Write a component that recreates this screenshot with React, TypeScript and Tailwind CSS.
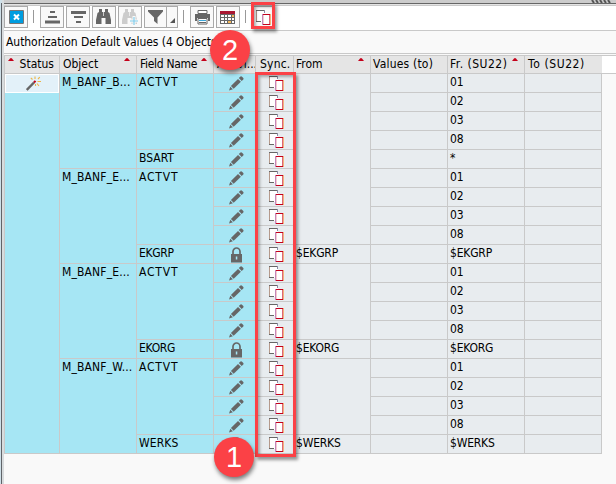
import React from "react";

type Cell = { n: number; text?: string; icon?: React.ReactNode; spacing?: string };

const HEIGHTS: Record<number, string> = {
  1: "h-[19px]",
  4: "h-[76px]",
  5: "h-[95px]",
  9: "h-[171px]",
  20: "h-[380px]",
};

function SyncIcon() {
  return (
    <svg width="15" height="15" viewBox="0 0 15 15" shapeRendering="crispEdges">
      <rect x="0" y="0" width="9" height="12" fill="#fff" />
      <path d="M0.5 0V12" stroke="#b59a8c" />
      <path d="M0 0.5H9M0 11.5H5" stroke="#666" />
      <path d="M8.5 0V3" stroke="#8b8ba8" />
      <rect x="6" y="4" width="9" height="11" fill="#fff" />
      <path d="M6.5 4V15" stroke="#c486b8" />
      <path d="M14.5 4V15" stroke="#f3b27c" />
      <path d="M7 4.5H14M7 14.5H14" stroke="#c4001a" />
      <path d="M13.5 4V15" stroke="#c4001a" strokeOpacity=".6" />
      <path d="M7.5 4V15" stroke="#c4001a" strokeOpacity=".2" />
    </svg>
  );
}

function Pencil() {
  return (
    <svg width="15" height="15" viewBox="0 0 15 15" fill="#666">
      <path d="M0 14.500 1.300 10.800 3.900 13.200Z" />
      <path d="M1.900 9.900 9 2.900 11.900 5.700 4.700 12.700Z" />
      <path d="M9.800 2.100 11.500.6Q12.300 0 13 .7L14.300 2Q14.900 2.700 14.300 3.400L12.700 4.900Z" />
    </svg>
  );
}

function Lock() {
  return (
    <svg width="13" height="16" viewBox="0 0 13 16">
      <path d="M3 8V4.500a3.500 3.500 0 0 1 7 0V8" fill="none" stroke="#666" strokeWidth="1.700" />
      <path fill="#666" d="M1 7h11v8.500H1z" />
      <path fill="#a6e6f4" d="M5.800 9.500h1.500v3H5.800z" />
    </svg>
  );
}

function Wand() {
  return (
    <svg width="15" height="15" viewBox="0 0 15 15">
      <path d="M.8 14 8 6.500" stroke="#666" strokeWidth="2.400" />
      <path d="M8 6.500 9.500 4.800" stroke="#c4001a" strokeWidth="2" />
      <path d="M9 3V.5M12 3l1.800-1.800M11.500 5.500H15M11 7.500l2 2.500M6.500 3.500 4.800 1.800M9.500 8v2" stroke="#eeb545" strokeWidth="1.100" />
    </svg>
  );
}

function Column({ title, width, cells, tone, sorted, head = "pl-[3px]", last }: {
  title: string; width: string; cells: Cell[]; tone: string; sorted?: "left" | "right"; head?: string; last?: boolean;
}) {
  return (
    <div className={`${width} flex shrink-0 flex-col`}>
      <div className={`relative h-[18px] overflow-hidden whitespace-nowrap border-b border-[#c9c9c9] bg-[#e5e5e5] leading-[17px] ${last ? "" : "border-r"} ${head}`}>
        {title}
        {sorted && (
          <svg className={`absolute top-[2px] ${sorted === "left" ? "left-[3px]" : "right-[6px]"}`} width="6" height="3" viewBox="0 0 6 3">
            <path d="M0 3 2 .500 3 0 4 .500 6 3Z" fill="#c4001a" />
          </svg>
        )}
      </div>
      {cells.map((c, i) => (
        <div key={i} className={`${HEIGHTS[c.n]} ${tone} overflow-hidden whitespace-nowrap border-b border-r border-[#c9c9c9] leading-[17px] ${c.spacing ?? ""} ${c.icon ? "flex items-start justify-center" : "pl-[2px]"}`}>
          {c.icon ?? c.text}
        </div>
      ))}
    </div>
  );
}

const rows = Array.from({ length: 20 }, (_, i) => i);
const codes = ["01", "02", "03", "08"];
const orgs = ["*", "$EKGRP", "$EKORG", "$WERKS"];
const fields = [
  { name: "BSART", spacing: "" },
  { name: "EKGRP", spacing: "tracking-[-0.3px]" },
  { name: "EKORG", spacing: "tracking-[-0.3px]" },
  { name: "WERKS", spacing: "tracking-[0.1px]" },
];
const cyan = "bg-[#a6e6f4]";
const grey = "bg-[#e8ecef]";

function Button({ children, className = "w-6" }: { children: React.ReactNode; className?: string }) {
  return <div className={`${className} flex h-[22px] items-center justify-center border border-[#aaa] bg-[#f9f9f9]`}>{children}</div>;
}

function Binoculars({ color, plus }: { color: string; plus?: boolean }) {
  return (
    <svg width="16" height="16" viewBox="0 0 16 16">
      <path fill={color} d="M3 0h3v3h3V0h3v3l1.500 1 1.500 7v4H9.500V9h-4v6H0v-4l1.500-7L3 3z" />
      <path d="M7.500 3V7" stroke="#f9f9f9" strokeWidth=".7" />
      {plus && <path d="M12 7v9M7.500 12H16" stroke="#f9f9f9" strokeWidth="3" />}
      {plus && <path d="M12 8v8M8 12H16" stroke="#82cdeb" strokeWidth="1.200" />}
    </svg>
  );
}

function Badge({ n, className }: { n: number; className: string }) {
  return (
    <div className={`absolute flex size-10 items-center justify-center rounded-full bg-[#fb4146] font-['Liberation_Sans',sans-serif] text-[29px] leading-none text-white shadow-[1px_3px_4px_rgba(0,0,0,0.5)] ${className}`}>
      {n}
    </div>
  );
}

export default function App() {
  return (
    <div className="relative flex h-[484px] w-[616px] overflow-hidden bg-[#f9f9f9] font-['DejaVu_Sans_Condensed','DejaVu_Sans',sans-serif] text-[12px] font-normal text-black">
      <div className="w-1 shrink-0 border-r-2 border-[#d8dcde] bg-[#cfe0e8]">
        <div className="mt-[3px] ml-px h-full w-px bg-[#606469]" />
      </div>
      <div className="flex min-w-0 flex-1 flex-col">
        <div className="flex h-[3px] shrink-0 justify-end bg-[#ccc] pr-[3px]">
          <svg width="22" height="3" viewBox="0 0 22 3"><path d="M1 0l2 3M5 0l2 3M9 0l2 3M13 0l2 3M17 0l2 3" stroke="#555" strokeWidth="2" /></svg>
        </div>
        <div className="h-[3px] shrink-0 border-t border-b border-t-[#666] border-b-[#c9c9c9] bg-[#e4e4e4]" />
        <div className="flex h-[25px] shrink-0 border-b border-[#c9c9c9] bg-white">
          <Button>
            <svg width="15" height="14" viewBox="0 0 15 14"><path d="M.500.500h14v13H.500z" fill="#fff" stroke="#777" /><path d="M1 1h13v12H1z" fill="#009de0" /><path d="m5 4.500 5 5m0-5-5 5" stroke="#fff" strokeWidth="2" /></svg>
          </Button>
          <div className="mr-[6px] ml-[5px] mt-1 h-[13px] w-px bg-[#999]" />
          <div className="flex gap-[2px]">
            <Button>
              <svg width="15" height="14" viewBox="0 0 15 14" fill="#666"><path d="M5 1h5v2H5zM3 6h9v2H3zM0 10.500h15v3H0z" /></svg>
            </Button>
            <Button>
              <svg width="15" height="14" viewBox="0 0 15 14" fill="#666"><path d="M0 1h15v3H0zM3 6h9v2H3zM5 11h5v2H5z" /></svg>
            </Button>
            <Button><Binoculars color="#666" /></Button>
            <Button><Binoculars color="#ccc" plus /></Button>
            <div className="flex">
              <Button className="w-[23px]">
                <svg width="15" height="16" viewBox="0 0 15 16"><path d="M0 1h15v1.500L9.500 8.500V15L6 12V8.500L0 2.500z" fill="#666" /></svg>
              </Button>
              <Button className="-ml-px w-[12px]">
                <svg className="mt-1.5" width="5" height="5" viewBox="0 0 5 5"><path d="M5 0V5H0z" fill="#555" /></svg>
              </Button>
            </div>
          </div>
          <div className="mr-[6px] ml-[5px] mt-1 h-[13px] w-px bg-[#999]" />
          <div className="flex gap-[2px]">
            <Button>
              <svg width="15" height="15" viewBox="0 0 15 15"><path d="M3 .500h9v3H3z" fill="#fff" stroke="#666" /><path d="M0 4h15v7h-2V8H2v3H0z" fill="#666" /><path d="M3 8.500h9v5.500H3z" fill="#fff" stroke="#666" /><path d="M4 10.500h7" stroke="#3ba6d9" /><path d="M4 12.500h7" stroke="#666" /></svg>
            </Button>
            <Button>
              <svg width="16" height="13" viewBox="0 0 16 13" shapeRendering="crispEdges"><path d="M0 0h15v13H0z" fill="#666" /><path d="M0 0h15v3H0z" fill="#aa1732" /><g fill="#fff"><path d="M1 4h3v2H1zM5 4h2v2H5zM8 4h3v2H8zM1 7h3v2H1zM5 7h2v2H5zM8 7h3v2H8zM12 7h2v2h-2zM1 10h3v2H1zM5 10h2v2H5zM12 10h2v2h-2z" /></g><path d="M12 4h2v2h-2zM8 10h3v2H8z" fill="#f6b95b" /></svg>
            </Button>
          </div>
          <div className="mr-[6px] ml-[5px] mt-1 h-[13px] w-px bg-[#999]" />
          <Button className="w-[23px]"><SyncIcon /></Button>
        </div>
        <div className="h-[23px] shrink-0 border-b border-[#c9c9c9] pl-[2px] leading-[23px] tracking-[-0.05px]">Authorization Default Values (4 Objects)</div>
        <div className="mt-px flex h-[19px] shrink-0 items-start border-t border-b border-[#c9c9c9] bg-white">
          <div className="flex border-l border-[#c9c9c9]">
            <Column title="Status" width="w-[55px]" tone={cyan} sorted="left" head="pr-[5px] text-right" cells={[
              { n: 20, icon: <div className="flex h-[19px] w-full items-center justify-center border-b border-[#c9c9c9] bg-[#e3f1f9] pl-[2px] outline-1 -outline-offset-1 outline-white"><Wand /></div> },
            ]} />
            <Column title="Object" width="w-[77px]" tone={cyan} sorted="right" cells={["B", "E", "E", "W"].map((s) => ({ n: 5, text: `M_BANF_${s}...`, spacing: "tracking-[0.15px]" }))} />
            <Column title="Field Name" width="w-[77px]" tone={cyan} sorted="right" head="pl-[3px] tracking-[-0.3px]" cells={fields.flatMap((f) => [{ n: 4, text: "ACTVT", spacing: "tracking-[0.8px]" }, { n: 1, text: f.name, spacing: f.spacing }])} />
            <Column title="Activi..." width="w-[42px]" tone={cyan} cells={rows.map((i) => ({ n: 1, icon: <div className="flex pt-[2px] pl-[3px]">{[9, 14, 19].includes(i) ? <Lock /> : <Pencil />}</div> }))} />
            <Column title="Sync." width="w-[38px]" tone={grey} head="pl-[4px] tracking-[0.2px]" cells={rows.map(() => ({ n: 1, icon: <div className="flex pt-[2px] pl-[4px]"><SyncIcon /></div> }))} />
            <Column title="From" width="w-[77px]" tone={grey} sorted="right" head="pl-[2px]" cells={[{ n: 9 }, { n: 1, text: "$EKGRP" }, { n: 4 }, { n: 1, text: "$EKORG" }, { n: 4 }, { n: 1, text: "$WERKS" }].map((c) => ({ ...c, spacing: "tracking-[-0.2px]" }))} />
            <Column title="Values (to)" width="w-[77px]" tone={grey} head="pl-[2px] tracking-[0.2px]" cells={rows.map(() => ({ n: 1 }))} />
            <Column title="Fr. (SU22)" width="w-[77px]" tone={grey} sorted="right" head="pl-[2px] tracking-[0.5px]" cells={orgs.flatMap((o) => [...codes, o]).map((text) => ({ n: 1, text, spacing: text.length > 2 ? "tracking-[-0.2px]" : "" }))} />
            <Column title="To (SU22)" width="w-[77px]" tone={grey} last head="pl-[3px] tracking-[0.6px]" cells={rows.map(() => ({ n: 1 }))} />
          </div>
        </div>
      </div>
      <div className="absolute top-[2px] left-[251px] h-[27px] w-[24px] border-3 border-[#fb4146] shadow-[2px_3px_3px_rgba(0,0,0,0.4),inset_2px_2px_3px_rgba(0,0,0,0.3)]" />
      <div className="absolute top-[72px] left-[255px] h-[385px] w-[41px] border-3 border-[#fb4146] shadow-[2px_3px_3px_rgba(0,0,0,0.4),inset_2px_2px_3px_rgba(0,0,0,0.3)]" />
      <Badge n={2} className="top-[30px] left-[210px]" />
      <Badge n={1} className="top-[437px] left-[214px]" />
    </div>
  );
}
